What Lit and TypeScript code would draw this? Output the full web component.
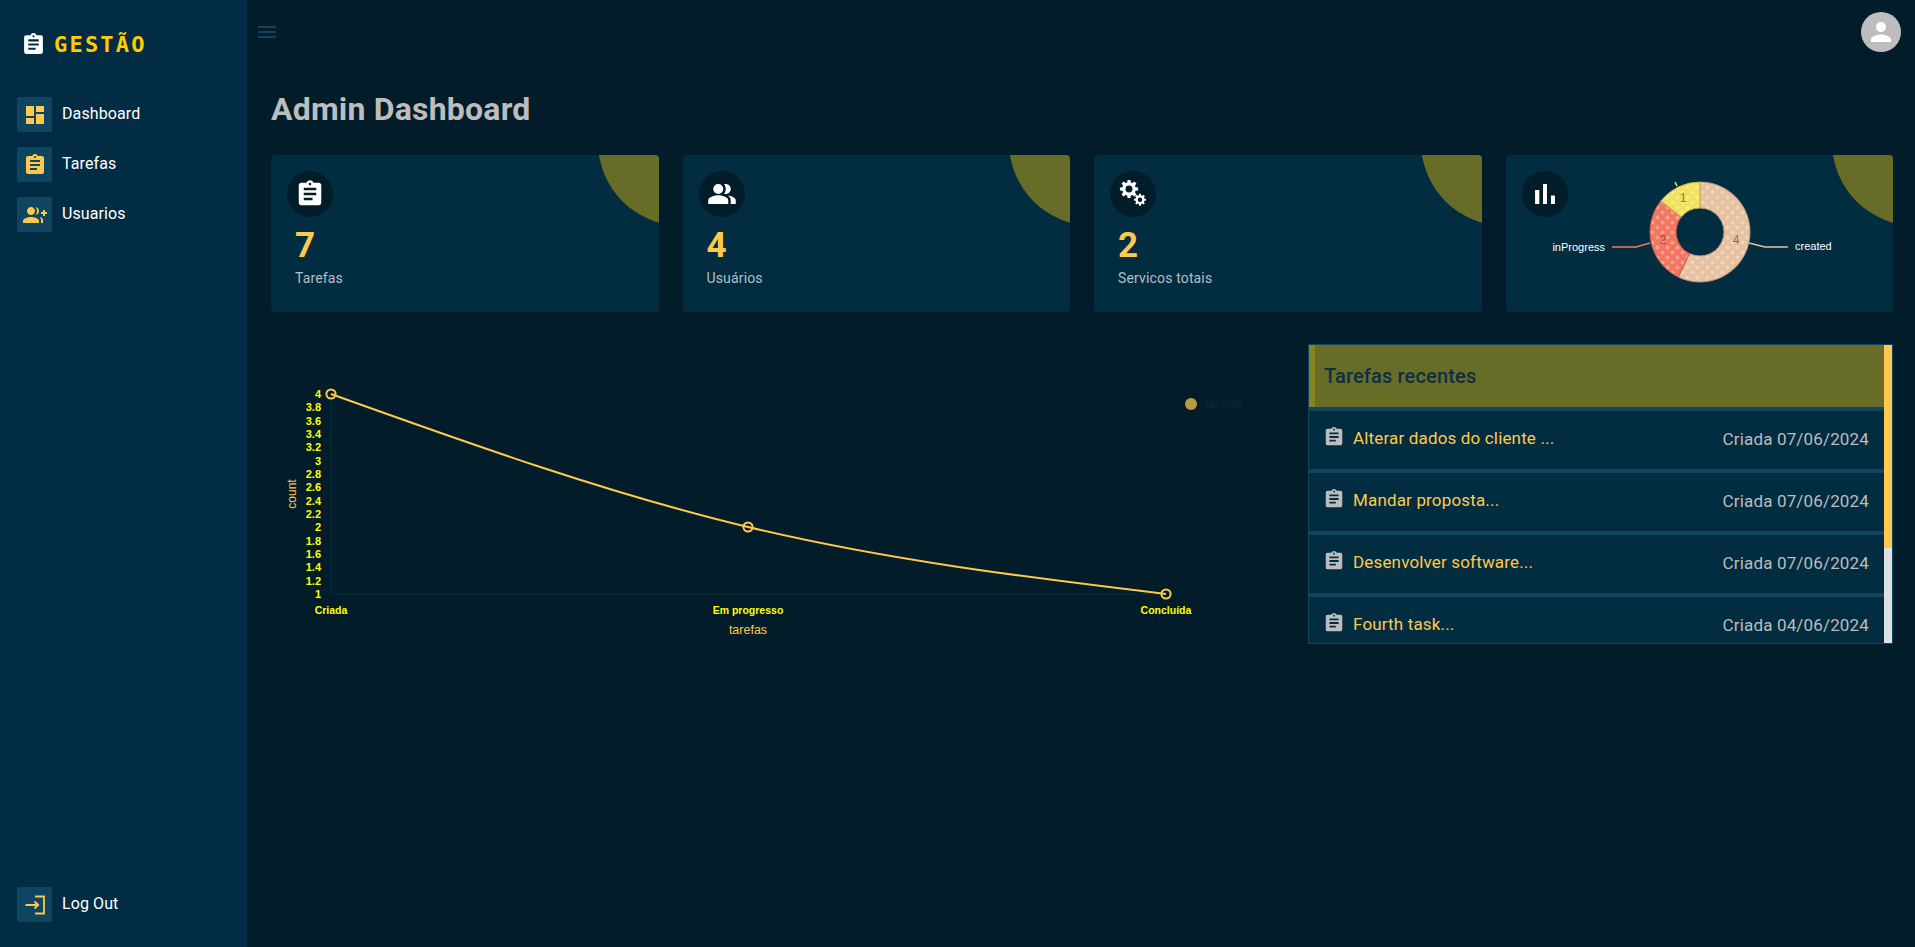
import { LitElement, html, svg, css } from 'lit';
import { customElement } from 'lit/decorators.js';

const ASSIGNMENT = 'M19 3h-4.18C14.4 1.84 13.3 1 12 1c-1.3 0-2.4.84-2.82 2H5c-1.1 0-2 .9-2 2v14c0 1.1.9 2 2 2h14c1.1 0 2-.9 2-2V5c0-1.1-.9-2-2-2zm-7 0c.55 0 1 .45 1 1s-.45 1-1 1-1-.45-1-1 .45-1 1-1zm2 14H7v-2h7v2zm3-4H7v-2h10v2zm0-4H7V7h10v2z';
const DASHBOARD = 'M3 13h8V3H3v10zm0 8h8v-6H3v6zm10 0h8V11h-8v10zm0-18v6h8V3h-8z';
const GROUP_ADD = 'M22 9V7h-2v2h-2v2h2v2h2v-2h2V9h-2zM8 12c2.21 0 4-1.79 4-4s-1.79-4-4-4-4 1.79-4 4 1.79 4 4 4zm0 2c-2.67 0-8 1.34-8 4v2h16v-2c0-2.66-5.33-4-8-4zM12.51 4.05C13.43 5.11 14 6.49 14 8s-.57 2.89-1.49 3.95C14.47 11.7 16 10.04 16 8s-1.53-3.7-3.49-3.95zM16.53 13.83C17.42 14.66 18 15.7 18 17v3h2v-3c0-1.45-1.59-2.51-3.47-3.17z';
const PEOPLE_ALT = 'M16.67 13.13C18.04 14.06 19 15.32 19 17v3h4v-3c0-2.18-3.57-3.47-6.33-3.87zM9 4a4 4 0 1 0 0 8 4 4 0 0 0 0-8zM15 12c2.21 0 4-1.79 4-4s-1.79-4-4-4c-.47 0-.91.1-1.33.24C14.5 5.27 15 6.58 15 8s-.5 2.73-1.33 3.76c.42.14.86.24 1.33.24zM9 13c-2.67 0-8 1.34-8 4v3h16v-3c0-2.66-5.33-4-8-4z';
const BAR_CHART = 'M5 9.2h3V19H5zM10.6 5h2.8v14h-2.8zm5.6 8H19v6h-2.8z';
const PERSON = 'M12 12c2.21 0 4-1.79 4-4s-1.79-4-4-4-4 1.79-4 4 1.79 4 4 4zm0 2c-2.67 0-8 1.34-8 4v2h16v-2c0-2.66-5.33-4-8-4z';
const MENU = 'M3 18h18v-2H3v2zm0-5h18v-2H3v2zm0-7v2h18V6H3z';

// cog outline with a round hole, teeth are plain trapezoids
function gear(cx: number, cy: number, r: number, teeth: number) {
  const pts: string[] = [];
  const step = (Math.PI * 2) / teeth;
  const body = r * 0.74;
  for (let i = 0; i < teeth; i++) {
    const a = i * step;
    const p = (rad: number, off: number) =>
      `${(cx + rad * Math.cos(a + off * step)).toFixed(2)} ${(cy + rad * Math.sin(a + off * step)).toFixed(2)}`;
    pts.push(p(body, -0.34), p(r, -0.2), p(r, 0.2), p(body, 0.34));
  }
  const h = r * 0.38;
  return `M${pts.join('L')}Z M${cx - h} ${cy}a${h} ${h} 0 1 0 ${h * 2} 0a${h} ${h} 0 1 0 ${-h * 2} 0Z`;
}

const icon = (d: string, size = 24) => html`<svg width=${size} height=${size} viewBox="0 0 24 24" fill="currentColor"><path d=${d}></path></svg>`;

const gearsIcon = html`<svg width="30" height="30" viewBox="0 0 30 30" fill="currentColor" fill-rule="evenodd">
  <path d=${gear(11, 10, 9.2, 8)}></path>
  <path d=${gear(22, 20.7, 6, 8)}></path>
</svg>`;

const stats = [
  { icon: icon(ASSIGNMENT, 30), value: '7', label: 'Tarefas' },
  { icon: icon(PEOPLE_ALT, 30), value: '4', label: 'Usuários' },
  { icon: gearsIcon, value: '2', label: 'Servicos totais' },
];

const tasks = [
  { title: 'Alterar dados do cliente ...', date: 'Criada 07/06/2024' },
  { title: 'Mandar proposta...', date: 'Criada 07/06/2024' },
  { title: 'Desenvolver software...', date: 'Criada 07/06/2024' },
  { title: 'Fourth task...', date: 'Criada 04/06/2024' },
];

const yTicks = ['4', '3.8', '3.6', '3.4', '3.2', '3', '2.8', '2.6', '2.4', '2.2', '2', '1.8', '1.6', '1.4', '1.2', '1'];

// donut slices, clockwise from the top
const CX = 1700;
const CY = 232;
function arc(from: number, to: number) {
  const pt = (r: number, v: number) => {
    const a = (v / 7) * Math.PI * 2;
    return `${(CX + r * Math.sin(a)).toFixed(2)} ${(CY - r * Math.cos(a)).toFixed(2)}`;
  };
  const big = (to - from) / 7 > 0.5 ? 1 : 0;
  return `M${pt(50, from)}A50 50 0 ${big} 1 ${pt(50, to)}L${pt(24, to)}A24 24 0 ${big} 0 ${pt(24, from)}Z`;
}

const slices = [
  { id: 'created', from: 0, to: 4, color: '#e8c1a0', edge: '#ba9a80', n: '4', lx: 1736, ly: 240 },
  { id: 'inProgress', from: 4, to: 6, color: '#f47560', edge: '#c35e4d', n: '2', lx: 1663, ly: 240 },
  { id: 'done', from: 6, to: 7, color: '#f1e15b', edge: '#c1b449', n: '1', lx: 1683, ly: 198 },
];

@customElement('app-root')
export class AppRoot extends LitElement {
  static styles = css`
    :host {
      display: block;
      font-family: Roboto, 'Liberation Sans', sans-serif;
    }
    .layout {
      display: grid;
      grid-template-columns: 247px 1fr;
      height: 947px;
      background: #021c2a;
      overflow: hidden;
    }
    .sidebar {
      background: #022c43;
      display: flex;
      flex-direction: column;
      padding: 0 17px 25px;
      box-sizing: border-box;
    }
    .brand {
      display: flex;
      align-items: center;
      gap: 8px;
      height: 97px;
      padding: 0 0 8px 4px;
      box-sizing: border-box;
      color: #fff;
    }
    .brand span {
      font-family: 'DejaVu Sans Mono', monospace;
      font-size: 22px;
      font-weight: 700;
      letter-spacing: 2.2px;
      color: #ffcc00;
    }
    nav {
      display: flex;
      flex-direction: column;
      gap: 15px;
      flex: 1;
    }
    .nav-item {
      display: flex;
      align-items: center;
      gap: 10px;
      color: #fff;
      font-size: 16px;
      letter-spacing: 0.1px;
    }
    .nav-item span {
      margin-top: -2px;
    }
    .nav-box {
      width: 35px;
      height: 35px;
      border-radius: 2px;
      background: #0f4561;
      color: #ffc94d;
      display: flex;
      align-items: center;
      justify-content: center;
    }
    main {
      min-width: 0;
      padding: 0 22px 0 24px;
    }
    .topbar {
      display: flex;
      justify-content: space-between;
      padding-top: 12px;
      margin-left: -16px;
      height: 52px;
      box-sizing: border-box;
      margin-right: -8px;
    }
    .menu {
      color: #0f4561;
      margin-top: 8px;
    }
    .avatar {
      width: 40px;
      height: 40px;
      border-radius: 50%;
      background: #bdbdbd;
      color: #fff;
      display: flex;
      align-items: center;
      justify-content: center;
    }
    h1 {
      margin: 37px 0 0;
      font-size: 32px;
      letter-spacing: 0.2px;
      line-height: 40px;
      font-weight: 700;
      color: #bdbdbd;
    }
    .stats {
      display: grid;
      grid-template-columns: repeat(4, 1fr);
      gap: 24px;
      margin-top: 26px;
    }
    .card {
      position: relative;
      overflow: hidden;
      height: 157px;
      box-sizing: border-box;
      padding: 16px;
      background: #022c40;
      border-radius: 4px;
    }
    .corner {
      position: absolute;
      top: -97px;
      right: -107px;
      width: 168px;
      height: 168px;
      border-radius: 50%;
      background: #676d27;
    }
    .round {
      position: relative;
      width: 46px;
      height: 46px;
      border-radius: 50%;
      background: #021c2a;
      color: #fff;
      display: flex;
      align-items: center;
      justify-content: center;
    }
    .value {
      margin: 8px 0 0 8px;
      font-size: 35px;
      line-height: 41px;
      font-weight: 700;
      color: #ffc94d;
    }
    .label {
      margin: 2px 0 0 8px;
      font-size: 14px;
      letter-spacing: 0.15px;
      line-height: 20px;
      color: #b4bfc6;
    }
    .donut {
      position: absolute;
      inset: 0;
      width: 100%;
      height: 100%;
    }
    .lower {
      display: grid;
      grid-template-columns: 1fr 585px;
      gap: 24px;
      margin-top: 32px;
    }
    .chart {
      display: block;
      width: 1013px;
      height: 300px;
    }
    .panel {
      height: 300px;
      box-sizing: border-box;
      border: 1px solid #0f4561;
      display: flex;
      background: #022c40;
    }
    .list {
      flex: 1;
      min-width: 0;
      overflow: hidden;
    }
    /* painted by hand: the browser hides real scrollbars in the photo */
    .bar {
      width: 8px;
      background: #e0e0e0;
    }
    .thumb {
      height: 203px;
      background: #ffc94d;
    }
    .panel-head {
      height: 62px;
      box-sizing: border-box;
      padding-left: 9px;
      display: flex;
      align-items: center;
      background: #676d27;
      border-left: 6px solid #85851f;
      font-size: 20px;
      letter-spacing: 0.15px;
      font-weight: 500;
      color: #0c2f45;
    }
    .row {
      height: 62px;
      box-sizing: border-box;
      border-top: 4px solid #0f4561;
      padding: 0 15px 4px 14px;
      display: flex;
      align-items: center;
      justify-content: space-between;
      font-size: 17px;
      letter-spacing: 0.16px;
    }
    .row-title {
      display: flex;
      align-items: center;
      gap: 8px;
      color: #ffc94d;
    }
    .row-title svg {
      color: #bdbdbd;
      margin-top: -2px;
    }
    .row-date {
      color: #bdbdbd;
      padding-top: 2px;
    }
  `;

  private renderDonut() {
    return html`<svg class="donut" viewBox="1506 155 387.5 157" font-family="Liberation Sans, sans-serif">
      <defs>
        ${slices.map(
          (s) => svg`<pattern id=${`dots-${s.id}`} width="10" height="10" patternUnits="userSpaceOnUse">
            <rect width="10" height="10" fill=${s.color}></rect>
            <circle cx="2.5" cy="2.5" r="2" fill="rgba(255,255,255,0.3)"></circle>
            <circle cx="7.5" cy="7.5" r="2" fill="rgba(255,255,255,0.3)"></circle>
          </pattern>`
        )}
      </defs>
      ${slices.map((s) => svg`<path d=${arc(s.from, s.to)} fill=${`url(#dots-${s.id})`} stroke=${s.edge} stroke-width="1"></path>`)}
      ${slices.map((s) => svg`<text x=${s.lx} y=${s.ly + 4} text-anchor="middle" font-size="12" fill="#333" fill-opacity="0.6">${s.n}</text>`)}
      <path d="M1749 243L1765 247H1788" fill="none" stroke="#e8c1a0" stroke-width="1.5"></path>
      <path d="M1650 243L1636 247H1612" fill="none" stroke="#f47560" stroke-width="1.5"></path>
      <path d="M1677 186L1675 182" fill="none" stroke="#f1e15b" stroke-width="1.5"></path>
      <text x="1795" y="250" font-size="11" fill="#fff">created</text>
      <text x="1605" y="251" text-anchor="end" font-size="11" fill="#fff">inProgress</text>
    </svg>`;
  }

  private renderChart() {
    return html`<svg class="chart" viewBox="271 344 1013 300" font-family="Liberation Sans, sans-serif">
      <path d="M331 394V594H1166" fill="none" stroke="#022c40" stroke-width="1"></path>
      ${yTicks.map(
        (t, i) => svg`<text x="321" y=${394 + (i * 200) / 15 + 4} text-anchor="end" font-size="11" font-weight="700" fill="#ffff00">${t}</text>`
      )}
      ${[
        { x: 331, t: 'Criada' },
        { x: 748, t: 'Em progresso' },
        { x: 1166, t: 'Concluída' },
      ].map((l) => svg`<text x=${l.x} y="614" text-anchor="middle" font-size="10.5" font-weight="700" fill="#ffff00">${l.t}</text>`)}
      <text transform="translate(296 494) rotate(-90)" text-anchor="middle" font-size="12" fill="#ffc94d">count</text>
      <text x="748" y="634" text-anchor="middle" font-size="12.5" fill="#ffc94d">tarefas</text>
      <path d="M331 394C470 443.9 609 493.7 748 527C887 560.3 1026.7 577.3 1166 594" fill="none" stroke="#ffc94d" stroke-width="2"></path>
      ${[
        [331, 394],
        [748, 527],
        [1166, 594],
      ].map(([x, y]) => svg`<circle cx=${x} cy=${y} r="4.6" fill="none" stroke="#ffc94d" stroke-width="2"></circle>`)}
      <circle cx="1191" cy="404" r="6" fill="#b89b40"></circle>
      <text x="1206" y="408" font-size="12" fill="#032c3f">tarefas</text>
    </svg>`;
  }

  render() {
    return html`<div class="layout">
      <aside class="sidebar">
        <div class="brand">${icon(ASSIGNMENT, 25)}<span>GESTÃO</span></div>
        <nav>
          <div class="nav-item"><div class="nav-box">${icon(DASHBOARD)}</div><span>Dashboard</span></div>
          <div class="nav-item"><div class="nav-box">${icon(ASSIGNMENT)}</div><span>Tarefas</span></div>
          <div class="nav-item"><div class="nav-box">${icon(GROUP_ADD)}</div><span>Usuarios</span></div>
        </nav>
        <div class="nav-item">
          <div class="nav-box">
            <svg width="24" height="24" viewBox="0 0 24 24" fill="none" stroke="currentColor" stroke-width="1.8">
              <path d="M2.5 12H15M11.5 8.5L15.2 12L11.5 15.5M12 3.5H21V20.5H12"></path>
            </svg>
          </div>
          <span>Log Out</span>
        </div>
      </aside>
      <main>
        <div class="topbar">
          <div class="menu">${icon(MENU)}</div>
          <div class="avatar">${icon(PERSON, 30)}</div>
        </div>
        <h1>Admin Dashboard</h1>
        <section class="stats">
          ${stats.map(
            (s) => html`<div class="card">
              <div class="corner"></div>
              <div class="round">${s.icon}</div>
              <div class="value">${s.value}</div>
              <div class="label">${s.label}</div>
            </div>`
          )}
          <div class="card">
            <div class="corner"></div>
            <div class="round">${icon(BAR_CHART, 34)}</div>
            ${this.renderDonut()}
          </div>
        </section>
        <section class="lower">
          ${this.renderChart()}
          <div class="panel">
            <div class="list">
              <div class="panel-head">Tarefas recentes</div>
              ${tasks.map(
                (t) => html`<div class="row">
                  <div class="row-title">${icon(ASSIGNMENT, 22)}${t.title}</div>
                  <div class="row-date">${t.date}</div>
                </div>`
              )}
            </div>
            <div class="bar"><div class="thumb"></div></div>
          </div>
        </section>
      </main>
    </div>`;
  }
}
